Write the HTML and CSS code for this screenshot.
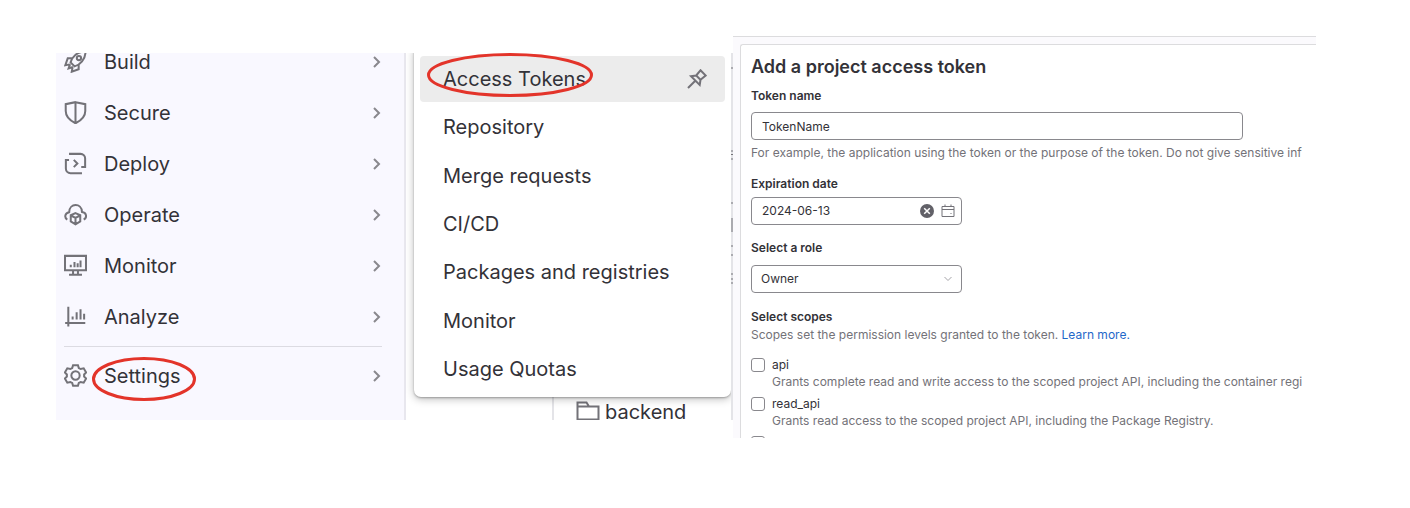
FILE: index.html
```html
<!DOCTYPE html>
<html lang="en">
<head>
<meta charset="utf-8">
<title>Project access tokens</title>
<link rel="stylesheet" href="styles.css">
</head>
<body>
<main class="page">
  <section class="project">
    <nav class="sidebar" aria-label="Project">
      <a class="nav-item" href="#"><svg class="icon" viewBox="0 0 16 16"><path d="M4.600 8.600C5.500 5 9 1.200 15 1 15 6.500 11 10.500 7.400 11.400zM5.800 5.800H2.600L.9 10.600l3.200-.6M10.200 10.200v3.200L5.400 15.100l.6-3.200M4.200 9.800l-1 3 3-1"/><circle cx="10.400" cy="5.600" r="1.500"/></svg><span>Build</span><svg class="chevron" viewBox="0 0 8 12"><path d="M1 1l5 5-5 5"/></svg></a>
      <a class="nav-item" href="#"><svg class="icon" viewBox="0 0 16 16"><path d="M8 .8L14.800 2.200V7c0 4-2.800 6.600-6.800 8.500C4 13.600 1.200 11 1.200 7V2.200zM8 1v14"/></svg><span>Secure</span><svg class="chevron" viewBox="0 0 8 12"><path d="M1 1l5 5-5 5"/></svg></a>
      <a class="nav-item" href="#"><svg class="icon" viewBox="0 0 16 16"><path d="M3.500 1.300H11.500a3.200 3.200 0 0 1 3.200 3.200V10.500H12M3.500 5.500H1.300V11.500a3.200 3.200 0 0 0 3.200 3.200H12.500M6.800 5.500L9.300 8l-2.500 2.500"/></svg><span>Deploy</span><svg class="chevron" viewBox="0 0 8 12"><path d="M1 1l5 5-5 5"/></svg></a>
      <a class="nav-item" href="#"><svg class="icon" viewBox="0 0 16 16"><path d="M2.300 11.500C.3 10.500.2 7 3.600 6.400 3.700-.2 12.300-.2 12.500 6.200c3.400.4 3.700 4.200 1.200 5.300M8 7l3.300 1.500v4.300L8 14.800l-3.300-2V8.500zM4.800 8.700L8 10.300l3.200-1.600M8 10.300v4.200"/></svg><span>Operate</span><svg class="chevron" viewBox="0 0 8 12"><path d="M1 1l5 5-5 5"/></svg></a>
      <a class="nav-item" href="#"><svg class="icon" viewBox="0 0 16 16"><path d="M.7 1.300h14.600v10H.7zM6.300 11.500v3M9.700 11.500v3M3.500 14.500h9M4.700 7.500v1.800M7.300 5.500v3.800M9.500 6.500v2.800M11.500 4.500v4.800"/></svg><span>Monitor</span><svg class="chevron" viewBox="0 0 8 12"><path d="M1 1l5 5-5 5"/></svg></a>
      <a class="nav-item" href="#"><svg class="icon" viewBox="0 0 16 16"><path d="M3 1.200v13.800M.8 12.500h14M6 8v2M8.800 5v5M11.500 3v7M14 6v4"/></svg><span>Analyze</span><svg class="chevron" viewBox="0 0 8 12"><path d="M1 1l5 5-5 5"/></svg></a>
      <hr class="divider">
      <a class="nav-item" href="#"><svg class="icon" viewBox="0 0 16 16"><path d="M6.300.8h3.400l.6 2 1.300.7 2.100-.5 1.700 2.900L14 7.300v1.400l1.400 1.400-1.700 2.900-2.100-.5-1.300.7-.6 2H6.300l-.6-2-1.300-.7-2.100.5L.6 10.100 2 8.700V7.300L.6 5.900 2.300 3l2.100.5 1.300-.7z"/><circle cx="8" cy="8" r="2.900"/></svg><span>Settings</span><svg class="chevron" viewBox="0 0 8 12"><path d="M1 1l5 5-5 5"/></svg><svg class="ring ring-settings" viewBox="0 0 104 44"><ellipse cx="52" cy="22" rx="50.500" ry="20.500"/></svg></a>
    </nav>
    <div class="files">
      <div class="file"><svg class="folder" viewBox="0 0 24 20"><path d="M1.500 18.500v-17h9l2.500 4h9.500v13zM1.500 5.500h11.500"/></svg><span>backend</span></div>
      <nav class="flyout" aria-label="Settings">
        <a class="sub-item current" href="#">Access Tokens<svg class="pin" viewBox="0 0 20 20"><path d="M13.500 1.300l5.200 5.200-5.200 4.300-.8 5.200-8.700-8.700 5.200-.8zM8.300 11.700L1 19M9.200 6.500l4.300 4.300"/></svg><svg class="ring ring-tokens" viewBox="0 0 166 44"><ellipse cx="83" cy="22" rx="81.500" ry="20.500"/></svg></a>
        <a class="sub-item" href="#">Repository</a>
        <a class="sub-item" href="#">Merge requests</a>
        <a class="sub-item" href="#">CI/CD</a>
        <a class="sub-item" href="#">Packages and registries</a>
        <a class="sub-item" href="#">Monitor</a>
        <a class="sub-item" href="#">Usage Quotas</a>
      </nav>
      <svg class="edge" viewBox="0 0 2 367"><path d="M0 15h2M0 98h2M0 101.500h2M0 106h2M0 150h2M0 193h2M0 202h2M0 221h2M0 226h2M0 230h2"/><path d="M1 165v14"/></svg>
    </div>
  </section>

  <section class="tokens">
    <form class="card">
      <h2 class="title">Add a project access token</h2>
      <label class="label" for="name">Token name</label>
      <input class="field name-field" id="name" type="text" value="TokenName">
      <p class="hint">For example, the application using the token or the purpose of the token. Do not give sensitive inf</p>
      <label class="label spaced" for="date">Expiration date</label>
      <div class="field short date-field">
        <input class="date" id="date" type="text" value="2024-06-13">
        <button class="icon-button" type="button" aria-label="Clear date"><svg class="clear" viewBox="0 0 14 14"><circle cx="7" cy="7" r="7"/><path d="M4.200 4.200l5.600 5.600M9.800 4.200L4.200 9.800"/></svg></button>
        <button class="icon-button" type="button" aria-label="Open calendar"><svg class="calendar" viewBox="0 0 14 14"><path d="M1 2.500h12v10H1zM1 5.500h12M4 .5v2M10 .5v2"/><path d="M9.500 9.500h1"/></svg></button>
      </div>
      <label class="label spaced" for="role">Select a role</label>
      <div class="role">
        <select class="field short select" id="role"><option>Owner</option></select>
        <svg class="caret" viewBox="0 0 8 6"><path d="M.5 1L4 4.500 7.500 1"/></svg>
      </div>
      <fieldset class="scopes">
        <legend class="label legend">Select scopes</legend>
        <p class="hint scope-intro">Scopes set the permission levels granted to the token. <a class="link" href="#">Learn more.</a></p>
        <label class="scope"><input class="check" type="checkbox"><span class="scope-name">api</span><span class="scope-text">Grants complete read and write access to the scoped project API, including the container regi</span></label>
        <label class="scope"><input class="check" type="checkbox"><span class="scope-name">read_api</span><span class="scope-text">Grants read access to the scoped project API, including the Package Registry.</span></label>
        <label class="scope"><input class="check" type="checkbox"><span class="scope-name">create_runner</span></label>
      </fieldset>
    </form>
  </section>
</main>
</body>
</html>
```
FILE: styles.css
```css
* { box-sizing: border-box; }
body { margin: 0; background: #fff; color: #333238; font-family: Inter, "Liberation Sans", sans-serif; }
svg { fill: none; stroke: #737278; flex: none; }
a { color: inherit; text-decoration: none; }

.page { display: grid; grid-template-columns: 677fr 583fr; align-items: start; padding: 36px 94px 36px 56px; }

.project { display: flex; height: 367px; margin-top: 17px; overflow: hidden; font-size: 20px; line-height: 28px; }
.sidebar { flex: 0 0 350px; padding: 0 22px 0 8px; background: #f9f8ff; border-right: 2px solid #e8e7ee; margin-top: -17px; }
.nav-item { position: relative; display: flex; align-items: center; gap: 17px; height: 51px; }
.icon { width: 23px; height: 23px; stroke-width: 1.4; }
.chevron { width: 8px; height: 12px; margin-left: auto; margin-right: 1px; stroke: #89888d; stroke-width: 2; }
.divider { height: 1px; margin: 4px 0 3px; border: 0; background: #dcdbe2; }

.ring { position: absolute; stroke: #e3342a; stroke-width: 3; }
.ring-settings { left: 28px; top: 7px; width: 104px; height: 44px; }
.ring-tokens { left: 7px; top: -3px; width: 166px; height: 44px; }

.files { position: relative; flex: 1; display: flex; flex-direction: column; justify-content: flex-end; }
.flyout { position: absolute; top: -8px; left: 8px; right: 2px; display: flex; flex-direction: column; justify-content: space-between; height: 352px; padding: 11px 6px 5px; background: #fff; border-radius: 7px; box-shadow: 0 1px 2px #0004, 0 2px 8px #0004; }
.sub-item { position: relative; display: flex; align-items: center; justify-content: space-between; height: 46px; padding: 0 18px 0 23px; border-radius: 4px; }
.current { background: #ececec; }
.pin { width: 20px; height: 20px; stroke-width: 2; }
.file { display: flex; align-items: center; gap: 5px; height: 24px; margin-left: 146px; padding-left: 22px; border-left: 2px solid #e4e4e8; line-height: 24px; }
.folder { width: 24px; height: 20px; stroke-width: 2; margin-top: 6px; }
.file span { margin-top: 8px; }
.edge { position: absolute; right: 0; top: 0; width: 2px; height: 367px; background: #e4e4e8; stroke: #737278; }

.tokens { height: 402px; padding: 7px 0 0 7px; overflow: hidden; background: #fbfafd; border-top: 1px solid #dcdcde; font-size: 12px; line-height: 16px; }
.card { height: 420px; padding: 11px 0 0 10px; background: #fff; border: 1px solid #dcdcde; border-right: 0; border-radius: 3px 0 0 0; white-space: nowrap; }
.title { margin: 0 0 10px; font-size: 18px; line-height: 22px; font-weight: 600; }
.label { display: block; font-weight: 600; }
.spaced { margin-top: 15px; }
.field { display: block; height: 28px; margin-top: 5px; padding: 0 10px; border: 1px solid #89888d; border-radius: 4px; background: #fff; color: #333238; font: inherit; }
.name-field { width: 87%; margin-top: 8px; }
.short { width: 211px; }
.hint { margin: 5px 0 0; color: #737278; }
.date-field { display: flex; align-items: center; gap: 7px; padding-right: 6px; }
.date { flex: 1; min-width: 0; padding: 0; border: 0; background: none; color: inherit; font: inherit; }
.icon-button { display: flex; padding: 0; border: 0; background: none; }
.clear, .calendar { width: 14px; height: 14px; }
.clear circle { fill: #626168; stroke: none; }
.clear path { stroke: #fff; stroke-width: 1.500; }
.role { position: relative; width: 211px; margin-top: 9px; }
.select { appearance: none; margin: 0; padding: 0 9px; }
.caret { position: absolute; right: 10px; top: 11px; width: 8px; height: 6px; stroke: #a4a3a8; pointer-events: none; }
.scopes { margin: 16px 0 0; padding: 0; border: 0; min-width: 0; }
.legend { padding: 0; }
.scope-intro { margin: 2px 0 14px; }
.link { color: #1f68c9; }
.scope { display: grid; grid-template-columns: 14px 1fr; column-gap: 7px; row-gap: 1px; align-items: center; margin-bottom: 6px; }
.check { appearance: none; width: 14px; height: 14px; margin: 0; border: 1px solid #89888d; border-radius: 3px; background: #fff; }
.scope-text { grid-column: 2; color: #737278; }
```
